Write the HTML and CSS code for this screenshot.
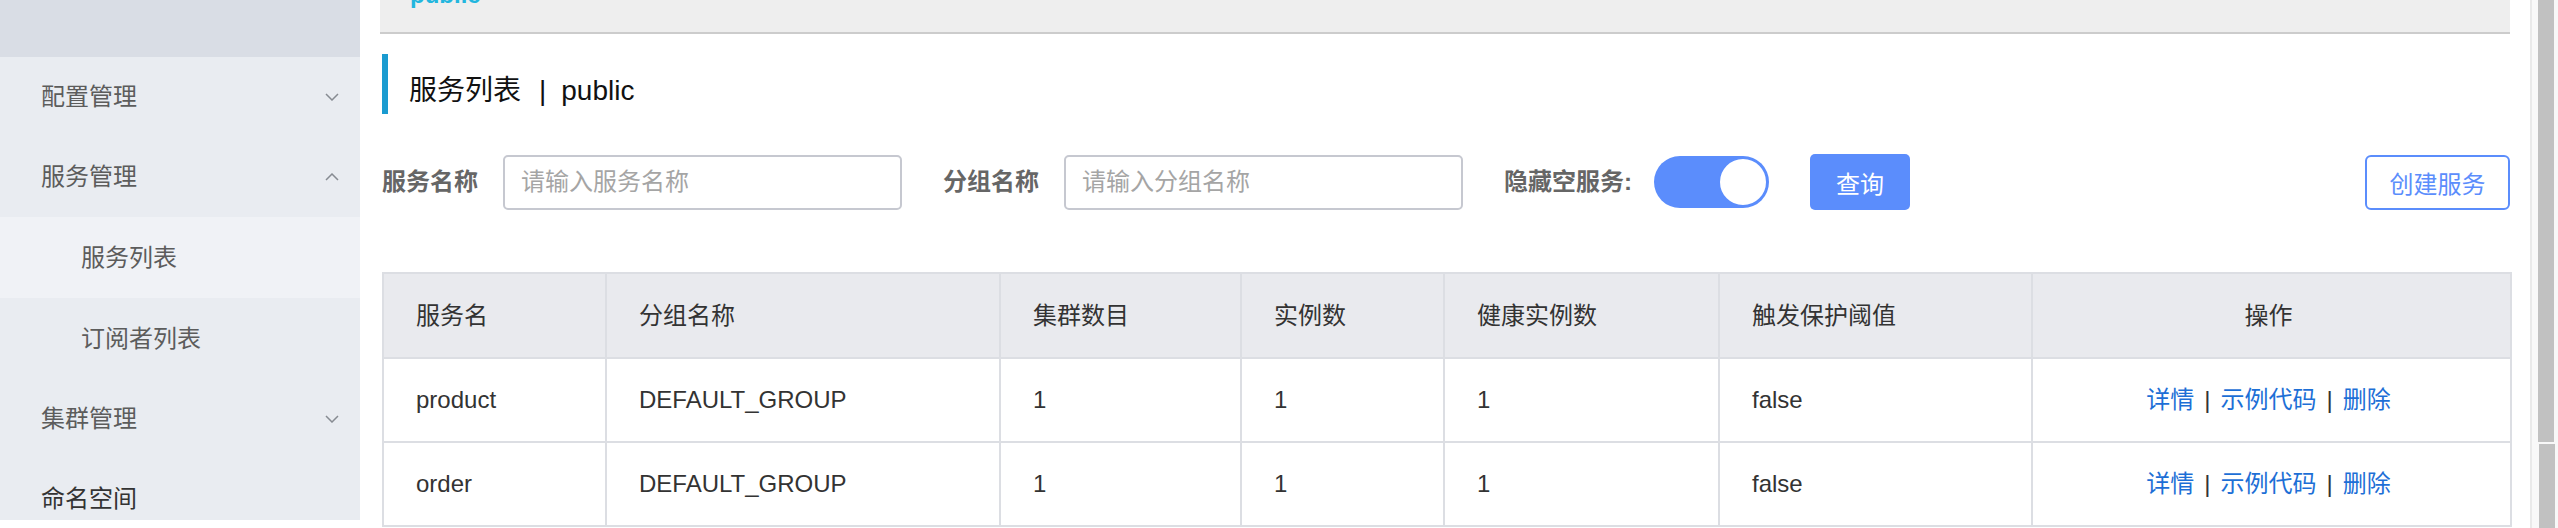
FILE: index.html
```html
<!DOCTYPE html>
<html lang="zh-CN">
<head>
<meta charset="utf-8">
<title>服务列表</title>
<link rel="stylesheet" href="styles.css">
</head>
<body>
<div class="app">
  <aside class="sidebar">
    <div class="sidebar-head"></div>
    <nav class="menu">
      <div class="menu-item"><span>配置管理</span>
        <svg class="chev" width="14" height="8" viewBox="0 0 14 8"><polyline points="1,1 7,7 13,1"/></svg>
      </div>
      <div class="menu-item"><span>服务管理</span>
        <svg class="chev" width="14" height="8" viewBox="0 0 14 8"><polyline points="1,7 7,1 13,7"/></svg>
      </div>
      <div class="sub-item active">服务列表</div>
      <div class="sub-item">订阅者列表</div>
      <div class="menu-item"><span>集群管理</span>
        <svg class="chev" width="14" height="8" viewBox="0 0 14 8"><polyline points="1,1 7,7 13,1"/></svg>
      </div>
      <div class="menu-item strong"><span>命名空间</span></div>
    </nav>
  </aside>

  <main class="main">
    <div class="ns-bar"><span class="ns-link">public</span></div>
    <div class="content">
      <h1 class="page-title">服务列表<span class="title-sep">|</span>public</h1>

      <div class="filters">
        <label class="filter-label">服务名称</label>
        <input class="text-input" type="text" placeholder="请输入服务名称">
        <label class="filter-label">分组名称</label>
        <input class="text-input" type="text" placeholder="请输入分组名称">
        <label class="filter-label narrow">隐藏空服务:</label>
        <span class="switch"><span class="knob"></span></span>
        <button class="btn-primary" type="button">查询</button>
        <button class="btn-outline" type="button">创建服务</button>
      </div>

      <table class="grid">
        <colgroup>
          <col class="c1"><col class="c2"><col class="c3"><col class="c4"><col class="c5"><col class="c6"><col class="c7">
        </colgroup>
        <thead>
          <tr>
            <th>服务名</th><th>分组名称</th><th>集群数目</th><th>实例数</th><th>健康实例数</th><th>触发保护阈值</th><th class="ops">操作</th>
          </tr>
        </thead>
        <tbody>
          <tr>
            <td>product</td><td>DEFAULT_GROUP</td><td>1</td><td>1</td><td>1</td><td>false</td>
            <td class="ops"><a class="link">详情</a><span class="sep">|</span><a class="link">示例代码</a><span class="sep">|</span><a class="link">删除</a></td>
          </tr>
          <tr>
            <td>order</td><td>DEFAULT_GROUP</td><td>1</td><td>1</td><td>1</td><td>false</td>
            <td class="ops"><a class="link">详情</a><span class="sep">|</span><a class="link">示例代码</a><span class="sep">|</span><a class="link">删除</a></td>
          </tr>
        </tbody>
      </table>
    </div>
  </main>

  <div class="scrollbar">
    <div class="thumb"></div>
    <div class="thumb lower"></div>
  </div>
</div>
</body>
</html>
```

FILE: styles.css
```css
* { box-sizing: border-box; }

html, body {
  margin: 0;
  padding: 0;
  background: #fff;
}

body {
  width: 2558px;
  height: 528px;
  overflow: hidden;
  font-family: "Liberation Sans", "Noto Sans CJK SC", sans-serif;
  color: #333;
}

.app {
  display: flex;
  height: 528px;
}

/* ---------- sidebar ---------- */
.sidebar {
  width: 360px;
  flex: none;
  height: 520px;
  background: #e9ecf1;
  overflow: hidden;
}

.sidebar-head {
  height: 57px;
  background: #d9dde5;
}

.menu-item {
  height: 80px;
  display: flex;
  align-items: center;
  justify-content: space-between;
  padding: 0 21px 0 41px;
  font-size: 24px;
  line-height: 28px;
  color: #5c5c5c;
}

.menu-item.strong { color: #333; }

.sub-item {
  height: 81px;
  display: flex;
  align-items: center;
  padding-left: 81px;
  font-size: 24px;
  line-height: 28px;
  color: #5c5c5c;
}

.sub-item.active {
  background: #f0f2f6;
}

.chev {
  fill: none;
  stroke: #878b92;
  stroke-width: 1.5;
}

/* ---------- main ---------- */
.main {
  width: 2130px;
  flex: none;
  margin-left: 20px;
}

.ns-bar {
  height: 34px;
  background: #eeeeee;
  border-bottom: 2px solid #cccccc;
  overflow: hidden;
  padding-left: 30px;
}

.ns-link {
  display: block;
  margin-top: -17px;
  font-size: 24px;
  line-height: 24px;
  font-weight: bold;
  color: #22b6de;
}

.content {
  padding-left: 2px;
}

.page-title {
  margin: 20px 0 0;
  height: 60px;
  border-left: 6px solid #1a9bd0;
  padding: 23px 0 0 21px;
  font-size: 28px;
  line-height: 28px;
  font-weight: normal;
  color: #111;
}

.title-sep {
  margin: 0 15px 0 18px;
  color: #111;
}

/* ---------- filters ---------- */
.filters {
  display: flex;
  align-items: center;
  height: 56px;
  margin-top: 40px;
}

.filter-label {
  font-size: 24px;
  line-height: 28px;
  font-weight: bold;
  color: #666;
  margin-right: 25px;
}

.filter-label.narrow { margin-right: 22px; }

.text-input {
  width: 399px;
  height: 55px;
  margin: 0 41px 0 0;
  border: 2px solid #c6c8d0;
  border-radius: 5px;
  padding: 0 16px;
  font-family: inherit;
  font-size: 24px;
  color: #333;
  background: #fff;
  outline: none;
}

.text-input::placeholder { color: #a5a5a5; }

.switch {
  display: flex;
  justify-content: flex-end;
  align-items: center;
  width: 115px;
  height: 52px;
  border-radius: 26px;
  background: #5b8dfc;
  margin-right: 41px;
}

.knob {
  width: 50px;
  height: 50px;
  margin-right: 1px;
  border-radius: 50%;
  background: #fff;
  border: 2px solid #5b8dfc;
}

.btn-primary {
  width: 100px;
  height: 56px;
  border: none;
  border-radius: 5px;
  background: #5b8dfc;
  color: #fff;
  font-family: inherit;
  font-size: 24px;
  padding: 0;
}

.btn-outline {
  margin-left: auto;
  width: 145px;
  height: 55px;
  border: 2px solid #5b8dfc;
  border-radius: 6px;
  background: #fff;
  color: #5b8dfc;
  font-family: inherit;
  font-size: 24px;
  padding: 0;
}

/* ---------- table ---------- */
.grid {
  margin-top: 62px;
  width: 2128px;
  border-collapse: collapse;
  table-layout: fixed;
}

.c1 { width: 223px; }
.c2 { width: 394px; }
.c3 { width: 241px; }
.c4 { width: 203px; }
.c5 { width: 275px; }
.c6 { width: 313px; }
.c7 { width: 479px; }

.grid th,
.grid td {
  border: 2px solid #dcdee3;
  padding: 0 0 0 32px;
  text-align: left;
  vertical-align: middle;
  font-size: 24px;
  line-height: 28px;
  font-weight: normal;
  color: #333;
}

.grid th {
  height: 85px;
  background: #e9eaee;
}

.grid td {
  height: 84px;
}

.grid .ops {
  text-align: center;
  padding: 0 6px 0 0;
}

.link {
  color: #1d6fd6;
  text-decoration: none;
}

.sep {
  margin: 0 10px;
  color: #333;
}

/* ---------- scrollbar ---------- */
.scrollbar {
  width: 28px;
  flex: none;
  margin-left: 20px;
  border-left: 2px solid #e9e9e9;
  background: #f8f8f8;
  padding-left: 6px;
  display: flex;
  flex-direction: column;
}

.thumb {
  width: 16px;
  height: 442px;
  background: #c1c1c1;
}

.thumb.lower {
  height: auto;
  flex: 1;
  margin-top: 2px;
  margin-left: 1px;
}
```
